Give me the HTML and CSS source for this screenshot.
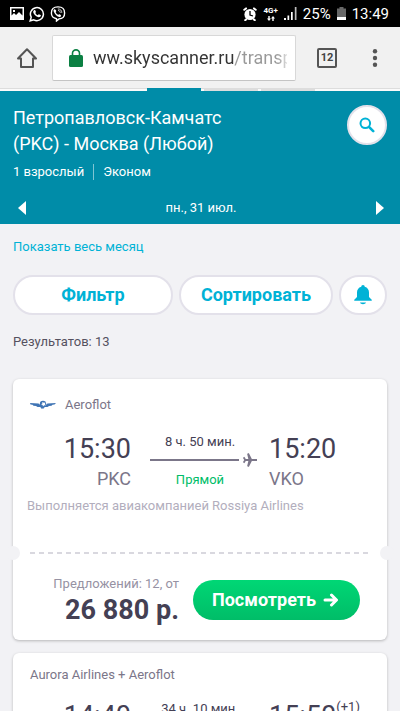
FILE: index.html
```html
<!DOCTYPE html>
<html lang="ru">
<head>
<meta charset="utf-8">
<meta name="viewport" content="width=device-width, initial-scale=1">
<title>Skyscanner</title>
<link rel="stylesheet" href="styles.css">
</head>
<body>
<div class="status">
  <div class="status-left">
    <svg width="14" height="13" viewBox="0 0 14 13"><path fill="#fff" fill-rule="evenodd" d="M0 0h14v13H0zM1.5 1.5v7L4 6l2 2 3-3 3.5 3.5v-7zM3 3h2v2H3z"/></svg>
    <svg width="16" height="16" viewBox="0 0 16 16"><path fill="none" stroke="#fff" stroke-width="1.5" d="M1.2 14.8l1-3.6A6.5 6.5 0 1 1 4.800 13.800z"/><path fill="#fff" d="M5.300 4.100c.6-.4 1 0 1.200.6l.4 1c.1.500-.3.800-.6 1.200.6 1.100 1.400 1.800 2.500 2.300l.9-.9c.3-.3 2.200.7 2.200 1 0 1.400-1.200 2-2.300 1.900C6.900 10.800 4.600 8.400 4.200 6.300c-.1-.8.400-1.700 1.100-2.200z"/></svg>
    <svg width="16" height="16" viewBox="0 0 16 16"><path fill="none" stroke="#fff" stroke-width="1.400" d="M8 .9c4.500 0 6.600 1.300 6.600 6.100 0 4.400-1.800 5.600-5.600 5.900L6.500 15v-2.300C3 12 1.400 10.900 1.400 7 1.400 2.200 3.500.9 8 .9z"/><path fill="#fff" d="M4.300 3.300c.8-.5 1.800 1 2 1.600.1.500-.7.900-.6 1.400.4 1.200 1.200 2 2.300 2.500.6.200.9-.8 1.500-.6.700.3 1.900 1.200 1.600 1.800-.4.800-1.200 1.400-2 1.100C6.500 10 4.500 7.800 3.600 5.200c-.2-.7.100-1.500.7-1.900z"/><path fill="none" stroke="#fff" stroke-width=".8" d="M7.800 2.900c2.700.1 4 1.500 4 4M8 4.500c1.500.1 2.300.9 2.300 2.300"/></svg>
  </div>
  <div class="status-right">
    <svg width="14" height="14" viewBox="0 0 14 14"><circle cx="7" cy="7.500" r="5.600" fill="#fff"/><path stroke="#fff" stroke-width="2" stroke-linecap="round" d="M1.300 2.800L3 1.400M12.700 2.800L11 1.400M3 12.500l-.8.800M11 12.500l.8.800"/><path fill="none" stroke="#000" stroke-width="1.300" d="M7 4v4l3 1"/></svg>
    <span class="network"><span>4G+</span><svg width="8" height="5" viewBox="0 0 8 5"><path fill="#fff" d="M0 2.500L2 5l2-2.500H2.700V0H1.300v2.500zM4 2.500L6 0l2 2.500H6.700V5H5.300V2.500z"/></svg></span>
    <svg width="13" height="13" viewBox="0 0 13 13"><path fill="#fff" d="M0 11h2v2H0zM3.500 8.500h1.700V13H3.500zM7 5h1.700v8H7z"/><path fill="#bbb" d="M10.800 0h1.700v13h-1.700z"/></svg>
    <span>25%</span>
    <svg width="9" height="13" viewBox="0 0 9 13"><path fill="#686868" d="M2.500 0h4v1.500H9V13H0V1.500h2.500z"/><path fill="#fff" d="M0 10h9v3H0z"/></svg>
    <span>13:49</span>
  </div>
</div>

<div class="toolbar">
  <button class="icon-button" aria-label="Домой"><svg width="20" height="20" viewBox="0 0 20 20"><path fill="none" stroke="#555" stroke-width="2" stroke-linejoin="round" stroke-linecap="round" d="M1 10.500L10 1.300l9 9.200h-3V19H4v-8.500z"/></svg></button>
  <div class="address">
    <svg width="14" height="18" viewBox="0 0 14 18"><rect y="6" width="14" height="12" rx="1.500" fill="#0b8043"/><path fill="none" stroke="#0b8043" stroke-width="1.600" d="M3.500 7V4.200a3.500 3.300 0 0 1 7 0V7"/></svg>
    <input class="url" type="text" aria-label="Адрес" value="ww.skyscanner.ru/transport">
  </div>
  <button class="tab-count" aria-label="Вкладки">12</button>
  <button class="icon-button" aria-label="Меню"><svg width="6" height="18" viewBox="0 0 6 18"><g fill="#555"><circle cx="3" cy="2.300" r="2.200"/><circle cx="3" cy="9" r="2.200"/><circle cx="3" cy="15.700" r="2.200"/></g></svg></button>
</div>
<div class="strip"><span class="strip-active"></span><span></span><span></span></div>

<header class="header">
  <div class="trip">
    <div>
      <h1>Петропавловск-Камчатс<br>(PKC) - Москва (Любой)</h1>
      <p class="details"><span>1 взрослый</span><span class="cabin">Эконом</span></p>
    </div>
    <button class="search" aria-label="Поиск"><svg width="16" height="16" viewBox="0 0 16 16"><circle cx="6.300" cy="6.300" r="4.800" fill="none" stroke="#00b2d6" stroke-width="2"/><path stroke="#00b2d6" stroke-width="2.600" stroke-linecap="round" d="M10.200 10.200l4 4"/></svg></button>
  </div>
  <div class="dates">
    <button class="arrow" aria-label="Назад"><svg width="8" height="14" viewBox="0 0 8 14"><path fill="#fff" d="M8 0v14L0 7z"/></svg></button>
    <span>пн., 31 июл.</span>
    <button class="arrow" aria-label="Вперёд"><svg width="8" height="14" viewBox="0 0 8 14"><path fill="#fff" d="M0 0v14l8-7z"/></svg></button>
  </div>
</header>

<main class="content">
  <a class="month" href="#">Показать весь месяц</a>
  <div class="actions">
    <button class="pill filter">Фильтр</button>
    <button class="pill sort">Сортировать</button>
    <button class="pill bell" aria-label="Уведомления"><svg width="18" height="20" viewBox="0 0 18 20"><path fill="#00b2d6" d="M9 0c1.100 0 1.700.8 1.700 1.700C13.600 2.500 15 4.700 15 7.500V12l2.500 2.500c.8.900.5 1.200-.3 1.200H.8c-.8 0-1.100-.3-.3-1.200L3 12V7.500c0-2.800 1.400-5 4.300-5.800C7.300.8 7.900 0 9 0zM6 17.500h6c-.6 2.300-5.400 2.300-6 0z"/></svg></button>
  </div>
  <p class="results">Результатов: 13</p>

  <article class="card">
    <div class="flight">
      <div class="airline with-logo">
        <svg width="26" height="9" viewBox="0 0 26 9"><path fill="#3f74b4" d="M0 3l8.500.4L10 4.800h6l1.500-1.400L26 3l-1.500 1.400-2 .3-1 1-2.500.2-1.500 1-2.500.2-1 .7-.8 1.200L13 8.200 11.800 9 11 7.800l-1-.7-2.500-.2-1.500-1-2.500-.2-1-1-2-.3z"/><circle cx="13" cy="4" r="3.200" fill="#3f74b4"/><path fill="#fff" d="M12.300 1.900l1.600.9 1.600-.4-.6 1.700.9 1.300-1.700-.1-1.100 1.200-.4-1.600-1.500-.6 1.300-.8z"/></svg>
        <span>Aeroflot</span>
      </div>
      <div class="route">
        <div class="depart"><div class="time">15:30</div><div class="airport">PKC</div></div>
        <div class="leg">
          <div class="duration">8 ч. 50 мин.</div>
          <div class="track"><span class="line"></span><svg width="14" height="14" viewBox="0 0 14 14"><path fill="none" stroke="#7b7689" stroke-width="1.800" stroke-linejoin="round" d="M1.800 7H14M.6 4.300L2.300 7 .6 9.700M5 .5L8.300 7 5 13.500M5 .5L6.500 7 5 13.500"/></svg></div>
          <div class="stops">Прямой</div>
        </div>
        <div class="arrive"><div class="time">15:20</div><div class="airport">VKO</div></div>
      </div>
      <p class="operated">Выполняется авиакомпанией Rossiya Airlines</p>
    </div>
    <div class="tear"><svg width="100%" height="2"><line x1="0" y1="1" x2="100%" y2="1" stroke="#d9d8df" stroke-width="2" stroke-dasharray="5 4"/></svg></div>
    <div class="offer">
      <div class="cost"><div class="count">Предложений: 12, от</div><div class="price">26 880 р.</div></div>
      <button class="view"><span>Посмотреть</span><svg width="16" height="14" viewBox="0 0 16 14"><path fill="none" stroke="#fff" stroke-width="3" stroke-linecap="round" stroke-linejoin="round" d="M2 7h11M8.500 2l5 5-5 5"/></svg></button>
    </div>
  </article>

  <article class="card">
    <div class="flight">
      <div class="airline">Aurora Airlines + Aeroflot</div>
      <div class="route">
        <div class="depart"><div class="time">14:40</div></div>
        <div class="leg"><div class="duration">34 ч. 10 мин.</div></div>
        <div class="arrive"><div class="time">15:50<sup>(+1)</sup></div></div>
      </div>
    </div>
  </article>
</main>
</body>
</html>
```

FILE: styles.css
```css
* { box-sizing: border-box; }
body {
  margin: 0;
  height: 100vh;
  overflow: hidden;
  background: #f2f2f5;
  color: #444054;
  font: 13px/20px Roboto, "Noto Sans", sans-serif;
}
h1, p { margin: 0; font-weight: 400; }
button { border: 0; padding: 0; margin: 0; background: none; color: inherit; font: inherit; }
svg { display: block; flex: none; }

.status {
  display: flex;
  justify-content: space-between;
  align-items: center;
  height: 27px;
  padding: 0 11px 0 10px;
  background: #000;
  color: #fff;
  font-size: 15px;
}
.status-left, .status-right { display: flex; align-items: center; gap: 5px; }
.status-right { gap: 6px; }
.network {
  display: flex;
  flex-direction: column;
  align-items: center;
  gap: 1px;
  font-size: 8px;
  font-weight: 700;
  line-height: 8px;
}

.toolbar {
  display: flex;
  align-items: center;
  height: 61px;
  padding: 0 22px 0 17px;
  background: #f1f1f1;
}
.icon-button { display: flex; }
.address {
  flex: 1;
  min-width: 0;
  display: flex;
  align-items: center;
  gap: 10px;
  height: 46px;
  margin: 0 21px 0 15px;
  padding: 0 8px 0 16px;
  background: #fff;
  border: 1px solid #d8d8d8;
  border-bottom-color: #c4c4c4;
  border-radius: 2px;
}
.url {
  flex: 1;
  min-width: 0;
  padding: 0;
  border: 0;
  outline: 0;
  font: 18px/24px Roboto, sans-serif;
  color: transparent;
  background: linear-gradient(90deg, #333 141px, #999 141px, #999 184px, #ddd 194px);
  -webkit-background-clip: text;
  background-clip: text;
}
.tab-count {
  width: 20px;
  height: 20px;
  margin-right: 35px;
  border: 2px solid #555;
  border-radius: 2px;
  color: #444;
  font-size: 11px;
  font-weight: 700;
  line-height: 16px;
}
.strip {
  display: flex;
  gap: 3px;
  height: 3px;
  padding-left: 147px;
  background: #fafafa;
  border-top: 1px solid #ddd;
}
.strip span { flex: 0 0 54px; margin-top: -1px; background: #ddd; }
.strip .strip-active { background: #008ca8; }

.header { background: #008ca8; color: #fff; padding: 14px 13px 6px; }
.trip { display: flex; justify-content: space-between; align-items: flex-start; }
h1 { font-size: 18px; line-height: 26px; }
.details { display: flex; margin-top: 7px; line-height: 16px; }
.cabin { margin-left: 9px; padding-left: 9px; border-left: 1px solid #7fc5d3; }
.search {
  display: grid;
  place-items: center;
  width: 40px;
  height: 40px;
  background: #fff;
  border: 2px solid #e3e1ea;
  border-radius: 50%;
}
.dates { display: flex; justify-content: space-between; align-items: center; margin-top: 18px; padding: 0 3px 0 5px; }
.arrow { display: flex; }

.content { padding: 14px 13px; }
.month { display: block; color: #00b2d6; text-decoration: none; line-height: 18px; }
.actions { display: flex; gap: 6px; margin-top: 19px; }
.pill {
  display: grid;
  place-items: center;
  height: 40px;
  background: #fff;
  border: 2px solid #e3e1ea;
  border-radius: 20px;
  color: #00b2d6;
  font-size: 18px;
  font-weight: 700;
}
.filter { flex: 160; }
.sort { flex: 154; }
.bell { flex: 0 0 48px; }
.results { margin: 17px 0 27px; color: #55515f; }

.card {
  position: relative;
  margin-bottom: 13px;
  background: #fff;
  border-radius: 6px;
  box-shadow: 0 1px 3px rgba(0, 0, 0, .25);
}
.flight { padding: 12px 0 36px; }
.airline { display: flex; align-items: center; gap: 9px; padding: 0 17px; color: #7b7689; }
.with-logo { height: 27px; }
.route { display: grid; grid-template-columns: 1fr 138px 1fr; margin-top: 13px; }
.depart { text-align: right; }
.time { font-size: 27px; line-height: 36px; }
.time sup { font-size: 13px; line-height: 0; vertical-align: 14px; }
.airport { font-size: 18px; line-height: 24px; color: #7b7689; }
.leg { text-align: center; line-height: 18px; }
.duration { margin-top: 2px; }
.track { display: flex; align-items: center; gap: 4px; margin: 2px 12px 4px 19px; }
.line { flex: 1; height: 2px; background: #7b7689; }
.stops { color: #00bd68; }
.operated { margin-top: 5px; padding: 0 14px; color: #b2aebd; }
.tear { position: relative; padding: 0 17px; }
.tear::before, .tear::after {
  content: "";
  position: absolute;
  top: -6px;
  width: 14px;
  height: 14px;
  background: #f2f2f5;
  border-radius: 50%;
}
.tear::before { left: -7px; }
.tear::after { right: -7px; }
.offer { display: flex; justify-content: flex-end; align-items: center; gap: 14px; padding: 20px 27px 14px 0; }
.cost { text-align: right; }
.count { color: #9692a3; }
.price { font-size: 27px; line-height: 32px; font-weight: 700; }
.view {
  display: flex;
  align-items: center;
  gap: 7px;
  height: 40px;
  padding: 0 21px 0 19px;
  border-radius: 20px;
  background: linear-gradient(#00d775, #00bd68);
  color: #fff;
  font-size: 18px;
  font-weight: 700;
}
```
